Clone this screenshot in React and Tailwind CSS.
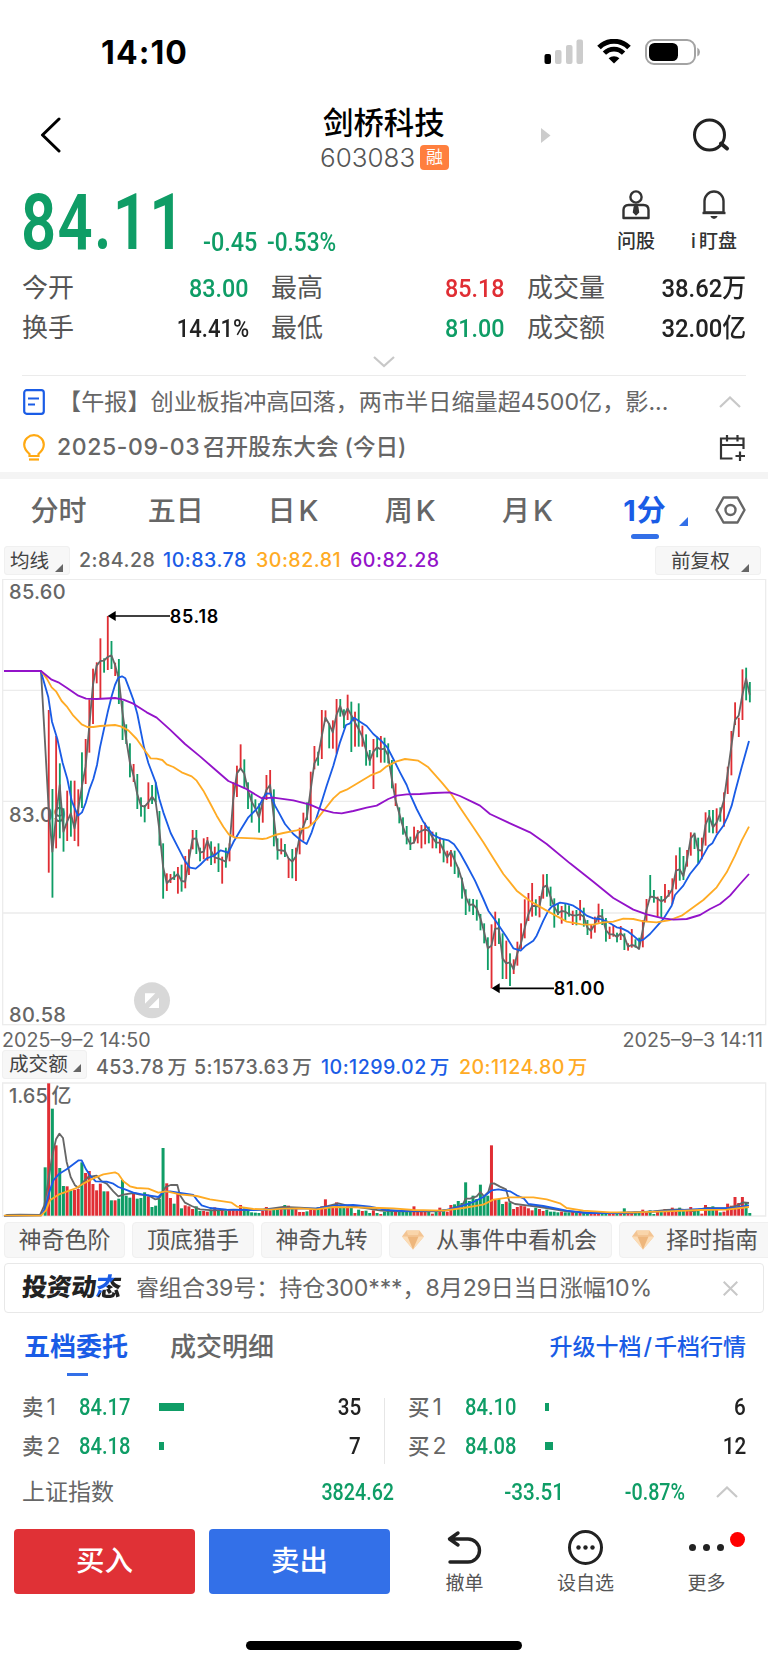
const GREEN = "#0f9d66";
const RED = "#e02e34";
const BLUE = "#1a5ce6";
const ORANGE = "#ffab24";
const PURPLE = "#9313c9";
const GREY = "#666666";

// chart units are thirds of a pixel
const STEP = 11.07;
const X0 = 146;
const barX = (i) => X0 + STEP * i;

// high, low, direction for each minute
const CANDLES = `393 881 r,630 956 g,471 808 r,553 778 g,688 818 g,635 786 r,605 773 g,605 786 r,631 802 r,520 687 g,480 615 r,361 521 r,269 435 r,250 313 r,178 358 r,238 281 g,111 273 r,186 270 g,251 291 r,240 375 g,
366 483 g,436 495 g,493 595 g,555 609 r,585 690 g,655 713 g,678 730 g,610 690 r,618 675 g,610 670 g,696 800 g,793 959 g,883 936 r,885 912 r,877 903 g,864 944 r,857 938 g,831 928 r,811 888 r,753 811 r,
753 825 g,806 847 g,778 841 r,774 845 r,787 858 g,803 853 r,793 879 g,833 914 r,806 866 g,793 847 r,610 771 r,560 654 r,496 570 r,541 628 g,610 690 g,643 731 g,661 688 g,673 761 g,653 731 r,588 663 r,
573 645 r,631 802 g,778 842 g,778 826 r,795 834 g,838 897 r,810 898 g,806 906 r,746 826 r,701 785 r,670 723 g,578 738 r,501 571 r,518 560 g,393 540 r,394 428 r,433 508 g,424 509 r,360 524 r,360 413 g,
391 448 g,347 423 r,368 519 g,398 503 r,373 503 g,440 503 r,466 560 g,513 560 g,480 630 r,473 535 g,471 551 r,476 551 g,493 553 g,543 628 g,613 681 r,685 733 g,715 767 g,741 796 g,773 813 g,743 793 r,
753 793 r,738 808 r,731 796 r,743 793 g,758 808 r,760 808 g,775 823 r,781 850 g,815 853 r,813 863 r,815 885 g,866 896 g,896 959 g,931 1008 g,959 998 g,960 1008 g,962 1025 g,1005 1054 g,1033 1093 g,1075 1173 g,
1036 1228 r,998 1101 r,1018 1095 g,1063 1200 g,1085 1200 r,1123 1221 g,1141 1185 r,1088 1160 r,1033 1111 r,961 1078 r,942 1026 r,912 1013 r,961 1010 g,951 1015 r,886 959 r,885 953 g,923 981 g,958 1046 g,975 1008 g,981 1034 r,
973 1023 g,979 1013 g,995 1038 r,993 1039 g,963 1024 r,986 1043 g,1023 1068 g,1035 1079 r,1013 1061 r,974 1031 r,990 1038 g,1017 1088 g,1043 1080 r,1038 1073 r,1061 1090 g,1041 1083 r,1063 1113 g,1093 1115 r,1050 1106 r,1081 1106 g,
1076 1108 g,1023 1105 r,960 1026 r,888 956 g,933 971 g,953 1013 r,951 1015 g,915 971 r,933 953 r,898 976 r,829 931 r,805 905 g,831 903 g,813 863 r,760 830 r,761 810 g,776 853 g,776 841 r,700 800 r,693 761 g,
693 763 g,688 763 r,685 728 g,640 743 r,563 645 r,456 589 r,370 438 r,416 474 r,271 423 r,266 364 g,309 370 g`
  .split(",")
  .map((row) => {
    const [high, low, dir] = row.trim().split(" ");
    return { high: +high, low: +low, color: dir === "r" ? RED : GREEN };
  });

const MA2 = [
  690, 818, 713, 618, 758, 728, 703, 748, 690, 623, 563, 443, 318, 260, 246, 245, 234, 229, 258, 300,
  400, 480, 550, 590, 645, 680, 683, 670, 653, 668, 753, 863, 913, 901, 895, 885, 906, 908, 843, 780,
  778, 821, 818, 785, 815, 836, 838, 843, 848, 803, 663, 583, 568, 583, 633, 668, 688, 715, 668, 633,
  618, 713, 813, 814, 816, 838, 848, 833, 773, 743, 713, 633, 553, 533, 473, 416, 435, 460, 408, 381,
  413, 388, 408, 430, 450, 473, 513, 545, 518, 505, 511, 509, 530, 600, 663, 703, 743, 773, 795, 791,
  763, 756, 751, 756, 775, 791, 791, 813, 835, 818, 843, 868, 903, 953, 978, 976, 988, 1018, 1058, 1108,
  1100, 1049, 1048, 1138, 1153, 1150, 1171, 1123, 1093, 1048, 1006, 981, 981, 983, 925, 919, 953, 983, 1003, 996,
  998, 1005, 1009, 1009, 1006, 1013, 1046, 1055, 1035, 1011, 1012, 1053, 1066, 1066, 1074, 1063, 1073, 1103, 1098, 1101,
  1110, 1053, 993, 953, 954, 959, 967, 961, 948, 931, 875, 871, 891, 843, 778, 765, 813, 815, 738, 711,
  745, 731, 703, 663, 583, 503, 423, 410, 348, 298, 348,
];

const MA10 =
  "123,278 145,355 156,428 172,480 188,552 202,600 215,665 225,690 234,710 246,700 257,672 268,632 280,600 291,558 300,505 312,450 323,400 335,352 345,318 355,296 366,292 376,298 390,335 401,365 412,405 432,505 445,552 467,610 478,660 490,700 512,762 534,805 556,848 570,866 587,869 600,858 620,838 642,830 662,814 685,821 700,790 722,752 745,715 767,693 778,680 789,658 800,643 811,644 825,680 835,698 855,735 880,765 900,782 920,795 935,760 950,715 966,665 980,620 1000,560 1020,490 1038,438 1050,433 1062,416 1080,428 1100,441 1120,465 1143,485 1162,505 1180,540 1200,580 1220,618 1232,650 1250,690 1268,725 1285,750 1300,768 1320,778 1345,784 1362,796 1380,822 1400,858 1425,905 1450,960 1465,995 1490,1030 1520,1075 1540,1108 1562,1115 1575,1102 1600,1085 1610,1070 1630,1025 1645,995 1655,983 1680,971 1700,974 1720,980 1740,993 1760,1010 1780,1018 1800,1020 1820,1027 1850,1045 1865,1048 1885,1058 1900,1070 1918,1086 1930,1082 1950,1065 1975,1037 1990,1020 2015,980 2025,948 2050,920 2070,885 2098,850 2125,802 2137,793 2150,768 2170,740 2182,715 2195,680 2205,640 2225,565 2247,486";
const MA30 =
  "123,276 140,298 155,325 168,337 185,366 200,382 220,410 245,436 262,444 280,444 300,441 345,438 362,442 385,454 410,480 435,515 452,538 470,539 487,543 500,556 520,564 545,580 575,592 590,605 610,635 630,672 650,710 670,743 686,766 705,776 760,778 787,780 800,778 825,768 850,762 890,754 925,745 950,722 975,690 1000,658 1020,640 1040,632 1065,617 1110,590 1140,578 1160,562 1190,547 1215,540 1255,545 1285,565 1325,610 1350,640 1385,693 1420,745 1450,790 1480,838 1510,885 1550,935 1590,966 1640,995 1700,1028 1745,1036 1780,1037 1805,1031 1840,1028 1870,1019 1900,1020 1930,1027 1970,1030 2010,1023 2045,1010 2080,985 2110,963 2150,925 2180,880 2205,830 2225,785 2247,743";
const MA60 =
  "12,276 123,276 155,302 175,310 200,326 235,350 258,359 290,360 345,357 370,362 400,374 440,400 470,416 510,452 555,495 600,532 640,567 685,606 735,628 785,658 820,656 880,664 930,677 965,692 1000,701 1025,703 1060,696 1100,686 1130,680 1165,660 1190,650 1220,646 1260,645 1300,642 1350,640 1380,651 1420,670 1440,680 1470,705 1530,733 1590,760 1640,795 1710,853 1780,908 1840,957 1900,992 1940,1006 1990,1018 2020,1022 2060,1020 2100,1008 2130,990 2160,975 2190,950 2220,915 2247,885";

const VOLUMES = [
  397, 321, 211, 143, 89, 88, 75, 77, 80, 160, 128, 134, 95, 76, 96, 73, 73, 46, 46, 51,
  107, 60, 54, 68, 51, 53, 70, 58, 26, 30, 50, 203, 97, 53, 36, 65, 22, 31, 28, 20,
  28, 14, 14, 12, 18, 25, 16, 18, 14, 16, 16, 14, 32, 22, 14, 10, 9, 8, 14, 26,
  16, 22, 20, 20, 32, 30, 22, 20, 11, 11, 13, 18, 20, 25, 28, 49, 24, 25, 40, 28,
  27, 28, 24, 8, 18, 14, 15, 8, 16, 8, 5, 12, 20, 16, 14, 16, 16, 14, 14, 28,
  12, 12, 12, 14, 6, 16, 24, 18, 12, 32, 34, 44, 38, 100, 44, 60, 50, 93, 60, 60,
  211, 48, 50, 35, 42, 40, 20, 26, 30, 28, 22, 16, 24, 20, 14, 18, 12, 12, 10, 12,
  10, 10, 12, 9, 10, 9, 10, 10, 8, 9, 8, 9, 8, 9, 8, 10, 22, 12, 10, 12,
  12, 18, 14, 16, 5, 12, 12, 20, 12, 24, 16, 24, 20, 14, 26, 20, 14, 6, 32, 22,
  28, 20, 10, 12, 36, 30, 56, 38, 56, 38, 8,
];

const VOL5 =
  "12,402 20,399 60,398 120,399 133,370 146,290 157,220 168,172 178,155 189,168 200,240 212,285 225,310 235,317 250,300 265,285 290,281 305,298 320,305 340,328 355,343 370,338 400,333 420,338 445,340 465,352 478,350 487,330 497,315 512,309 532,309 540,340 555,362 575,372 600,382 640,385 700,383 740,384 790,383 850,375 900,377 950,380 985,372 1015,364 1040,370 1100,379 1143,386 1200,388 1300,388 1345,384 1370,375 1388,368 1397,350 1410,350 1430,343 1441,330 1452,343 1465,330 1472,305 1482,304 1500,314 1518,322 1528,358 1545,366 1580,370 1620,375 1700,388 1780,393 1880,393 1960,388 2000,384 2040,382 2080,387 2120,378 2180,379 2210,371 2230,361 2247,363";
const VOL10 =
  "12,402 123,400 135,380 148,330 160,295 178,275 200,262 220,247 236,235 245,235 258,262 270,280 287,298 320,299 340,305 355,315 375,322 400,332 430,338 475,345 490,330 510,328 580,339 592,355 605,370 630,378 680,383 760,384 850,380 950,379 1010,370 1060,369 1110,374 1160,384 1210,387 1330,386 1380,374 1420,360 1450,345 1475,325 1495,322 1530,328 1550,340 1572,350 1585,366 1630,372 1700,386 1760,393 1850,393 1960,389 2050,384 2120,380 2200,378 2247,370";
const VOL20 =
  "12,401 123,401 138,385 150,355 175,338 200,329 225,320 250,305 280,289 310,277 345,271 355,276 370,298 390,313 410,318 445,320 475,332 500,328 540,337 590,342 630,352 695,362 712,374 760,381 810,383 850,380 900,379 950,382 1000,375 1060,376 1140,378 1180,379 1240,384 1330,386 1390,378 1450,368 1480,353 1530,346 1600,346 1640,352 1680,364 1700,378 1750,386 1830,391 1900,391 2000,388 2100,384 2180,383 2247,375";

function Line({ points, color }) {
  return <polyline points={points} fill="none" stroke={color} strokeWidth="5.5" strokeLinejoin="round" />;
}

function Chevron({ up = false }) {
  return (
    <svg width="22" height="12" viewBox="0 0 22 12" fill="none" stroke="#c8c8c8" strokeWidth="2.2">
      <path d={up ? "M1 11 L11 1.5 L21 11" : "M1 1 L11 10 L21 1"} />
    </svg>
  );
}

function Corner({ color = GREY, size = 8 }) {
  return (
    <svg width={size} height={size} viewBox="0 0 8 8">
      <path d="M8 0V8H0Z" fill={color} />
    </svg>
  );
}

function StatusBar() {
  return (
    <div className="h-[104px] pl-[101px] pr-[67px] flex justify-between items-start">
      <div className="mt-[33px] text-[32px] leading-[40px] font-bold text-black tracking-[1.1px]">14:10</div>
      <div className="mt-[39px] flex items-start">
        <svg width="39" height="26" viewBox="0 0 39 26">
          <rect x="0.5" y="15" width="6.5" height="10" rx="2" fill="#000" />
          <rect x="11" y="11" width="6.5" height="14" rx="2" fill="#ccc" />
          <rect x="22" y="6" width="6.5" height="19" rx="2" fill="#ccc" />
          <rect x="32.5" y="0.5" width="6.5" height="24.5" rx="2" fill="#ccc" />
        </svg>
        <svg className="ml-[14px]" width="34" height="26" viewBox="0 0 34 26">
          <path d="M2 8.6 A21 21 0 0 1 32 8.6" fill="none" stroke="#000" strokeWidth="5" />
          <path d="M7.4 14.2 A13.4 13.4 0 0 1 26.6 14.2" fill="none" stroke="#000" strokeWidth="4.6" />
          <path d="M17 24.5 L11.6 19.3 A8 8 0 0 1 22.4 19.3 Z" fill="#000" />
        </svg>
        <svg className="ml-[14px]" width="56" height="26" viewBox="0 0 56 26">
          <rect x="1" y="1" width="49" height="24" rx="8" fill="none" stroke="#a3a3a3" strokeWidth="2" />
          <rect x="4" y="4" width="29" height="18" rx="5.5" fill="#000" />
          <path d="M52.3 8.5 Q55 10 55 13 Q55 16 52.3 17.5Z" fill="#a3a3a3" />
        </svg>
      </div>
    </div>
  );
}

function Header() {
  return (
    <div className="h-[76px] grid grid-cols-[320px_130px_1fr]">
      <div className="pl-[40px] pt-[13px]">
        <svg width="22" height="36" viewBox="0 0 22 36" fill="none" stroke="#000" strokeWidth="3" strokeLinecap="round" strokeLinejoin="round">
          <path d="M19 2 L2.5 18 L19 34" />
        </svg>
      </div>
      <div>
        <h1 className="pl-[3px] pt-px text-[30.4px] leading-[36px] font-medium text-black whitespace-nowrap">剑桥科技</h1>
        <div className="flex items-center h-[32px]">
          <span className="w-[100px] text-[26px] font-light text-[#555]">603083</span>
          <span className="w-[29px] h-[25px] rounded-[4px] bg-[#ff7f3e] text-white text-[17px] leading-[24px] text-center">融</span>
        </div>
      </div>
      <div className="flex justify-between pl-[91px] pr-[38px]">
        <svg className="mt-[24px]" width="10" height="15" viewBox="0 0 10 15">
          <path d="M0 0 L9.5 7.5 L0 15Z" fill="#ccc" />
        </svg>
        <svg className="mt-[13px]" width="38" height="36" viewBox="0 0 38 36" fill="none" stroke="#222" strokeWidth="3" strokeLinecap="round">
          <circle cx="17.5" cy="18" r="15" />
          <path d="M29 26.5 L35 31.5" strokeWidth="4" />
        </svg>
      </div>
    </div>
  );
}

function Price() {
  return (
    <div className="h-[86px] pl-[21px] pr-[24px] flex justify-between">
      <div className="flex text-[#0f9d66] font-['Roboto',sans-serif]">
        <div className="w-[182px] h-[86px]">
          <div className="origin-left scale-x-[0.79] w-max text-[78px] leading-[86px] font-semibold tracking-[1.6px]">84.11</div>
        </div>
        <div className="w-[64px] pt-[46px]">
          <div className="origin-left scale-x-[0.9] w-max text-[26px] leading-[32px] font-medium">-0.45</div>
        </div>
        <div className="pt-[46px]">
          <div className="origin-left scale-x-[0.87] w-max text-[26px] leading-[32px] font-medium">-0.53%</div>
        </div>
      </div>
      <div className="flex text-[19px] leading-[24px] font-medium text-[#333]">
        <div className="w-[60px] pt-[10px] flex flex-col items-center">
          <svg width="28" height="30" viewBox="0 0 28 30" fill="none" stroke="#333" strokeWidth="2.4">
            <circle cx="14" cy="7" r="5.6" />
            <path d="M1.5 28 V20 Q1.5 15 6.5 15 H21.5 Q26.5 15 26.5 20 V28Z" strokeLinejoin="round" />
            <path d="M14 15.5 L12.7 17.5 L12 22 L14 24 L16 22 L15.3 17.5Z" fill="#333" />
          </svg>
          <span className="mt-[10px]">问股</span>
        </div>
        <div className="ml-[18px] w-[60px] pt-[10px] flex flex-col items-center">
          <svg width="24" height="30" viewBox="0 0 24 30" fill="none" stroke="#333" strokeWidth="2.4">
            <path d="M2.5 22.5 V11 A9.5 9.5 0 0 1 21.5 11 V22.5Z" strokeLinejoin="round" />
            <path d="M0.5 23 H23.5" />
            <path d="M8.3 26 H15.7 Q14.5 29 12 29 Q9.5 29 8.3 26Z" fill="#333" stroke="none" />
          </svg>
          <span className="mt-[10px] whitespace-nowrap">i<span className="ml-[3px]">盯盘</span></span>
        </div>
      </div>
    </div>
  );
}

const STATS = [
  [
    ["今开", "83.00", "text-[#0f9d66] scale-x-[0.88]"],
    ["最高", "85.18", "text-[#e02e34] scale-x-[0.88]"],
    ["成交量", "38.62万", "text-[#222] scale-x-[0.9]"],
  ],
  [
    ["换手", "14.41%", "text-[#222] scale-x-[0.83]"],
    ["最低", "81.00", "text-[#0f9d66] scale-x-[0.88]"],
    ["成交额", "32.00亿", "text-[#222] scale-x-[0.9]"],
  ],
];

function Stats() {
  return (
    <div className="h-[110px] mx-[22px] pt-[2px] border-b border-[#ebebeb]">
      {STATS.map((row, r) => (
        <div key={r} className="h-10 grid grid-cols-[227px_234px_219px] gap-x-[22px] items-center">
          {row.map(([label, value, color]) => (
            <div key={label} className="flex justify-between items-center text-[26px] leading-10">
              <span className="text-[#555] whitespace-nowrap">{label}</span>
              <span className={`origin-right text-[26.5px] font-medium font-['Roboto','Noto_Sans_CJK_SC',sans-serif] ${color}`}>
                {value}
              </span>
            </div>
          ))}
        </div>
      ))}
      <div className="flex justify-center pt-[8px]">
        <Chevron />
      </div>
    </div>
  );
}

function News() {
  return (
    <div className="h-[96px] pl-[23px] pr-[22px] text-[23.15px] text-[#666]">
      <div className="h-[52px] flex items-center">
        <svg width="22" height="26" viewBox="0 0 22 26" fill="none" stroke={BLUE} strokeWidth="2.2">
          <rect x="1.2" y="1.2" width="19.6" height="23.6" rx="2.5" />
          <path d="M5 9.5 H16 M5 15.5 H12" />
        </svg>
        <span className="ml-[13px] flex-1 whitespace-nowrap">【午报】创业板指冲高回落，两市半日缩量超4500亿，影...</span>
        <span className="mr-[5px]"><Chevron up /></span>
      </div>
      <div className="h-[38px] flex items-center font-medium">
        <svg width="22" height="27" viewBox="0 0 22 27" fill="none" stroke="#ffa912" strokeWidth="2.2">
          <path d="M6.5 22 V20 Q1.2 15.5 1.2 10.5 A9.8 9.3 0 0 1 20.8 10.5 Q20.8 15.5 15.5 20 V22Z" />
          <path d="M6 25.5 H16" />
        </svg>
        <span className="ml-[12px] w-[146px] text-[23px] tracking-[0.6px] whitespace-nowrap">2025-09-03</span>
        <span className="flex-1 text-[22.6px] whitespace-nowrap">召开股东大会 (今日)</span>
        <svg width="27" height="27" viewBox="0 0 27 27" fill="none" stroke="#333" strokeWidth="2.2">
          <path d="M24.5 15 V4.5 H2 V24.5 H13.5 M2 11 H24.5 M8 1 V7.5 M18.5 1 V7.5 M21 17.5 V27 M16.5 22 H26" />
        </svg>
      </div>
    </div>
  );
}

const PERIODS = ["日", "周", "月"];

function PeriodTabs() {
  return (
    <div className="h-[67px] flex text-[28px] leading-[40px] text-[#666] font-medium">
      <div className="w-[586px] pt-3 grid grid-cols-5 text-center">
        <span>分时</span>
        <span>五日</span>
        {PERIODS.map((p) => (
          <span key={p}>
            {p}
            <span className="ml-[3px] text-[29px]">K</span>
          </span>
        ))}
      </div>
      <div className="w-[114px] pt-3 pl-[34px] flex font-bold text-[#1a5ce6]">
        <div className="w-[50px] flex flex-col items-center">
          <span className="text-[29px] tracking-[1px] whitespace-nowrap">1分</span>
          <span className="mt-[3px] w-7 h-[5px] rounded-full bg-[#3370e8]" />
        </div>
        <span className="pl-[9px] pt-[26px] leading-none">
          <Corner color="#3370e8" size={9} />
        </span>
      </div>
      <svg className="mt-[17px] ml-[15px]" width="31" height="28" viewBox="0 0 31 28" fill="none" stroke="#666" strokeWidth="2.4">
        <path d="M8.5 1.5 H22.5 L29.5 14 L22.5 26.5 H8.5 L1.5 14Z" strokeLinejoin="round" />
        <circle cx="15.5" cy="14" r="5" />
      </svg>
    </div>
  );
}

function AverageRow() {
  return (
    <div className="h-[33px] pl-1 pr-[7px] flex items-start text-[19.6px] leading-[28px] font-medium tracking-[0.5px]">
      <div className="w-[66px] h-[29px] pl-[5px] flex bg-[#f7f7f7] border border-[#f0f0f0] rounded-[3px] text-[#444] font-normal tracking-normal">
        均线
        <span className="mt-[17px] ml-[6px] leading-none"><Corner /></span>
      </div>
      <span className="ml-[9px] w-[84px] text-[#666] whitespace-nowrap">2:84.28</span>
      <span className="w-[93px] text-[#1a5ce6]">10:83.78</span>
      <span className="w-[94px] text-[#ffab24]">30:82.81</span>
      <span className="flex-1 text-[#9313c9]">60:82.28</span>
      <div className="w-[106px] h-[29px] pl-[15px] flex bg-[#f7f7f7] border border-[#f0f0f0] rounded-[3px] text-[#444] font-normal tracking-normal">
        前复权
        <span className="mt-[17px] ml-[11px] leading-none"><Corner /></span>
      </div>
    </div>
  );
}

function Callout({ x, y, label }) {
  return (
    <g>
      <path d={`M${x} ${y} l24 -15 v30Z`} />
      <path d={`M${x + 20} ${y} H${x + 187}`} stroke="#000" strokeWidth="5" />
      <text x={x + 186} y={y + 20} fontSize="54" fontWeight="600" letterSpacing="2.2">{label}</text>
    </g>
  );
}

function PriceChart() {
  const ma2 = "12,276 123,276 135,490 " + MA2.map((y, i) => `${barX(i)},${y}`).join(" ");
  return (
    <svg className="block" width="768" height="447" viewBox="0 0 2304 1341">
      <g fill="none" stroke="#ececec" strokeWidth="4">
        <rect x="8" y="1" width="2289" height="1336" />
        <path d="M8 334 H2297 M8 667 H2297 M8 1002 H2297" />
      </g>
      <g fontSize="60" fontWeight="500" letterSpacing="0.9" fill={GREY}>
        <text x="27" y="61">85.60</text>
        <text x="27" y="730">83.09</text>
        <text x="27" y="1328">80.58</text>
      </g>
      {CANDLES.map((c, i) => (
        <rect key={i} x={barX(i) - 2.5} y={c.high} width="5.5" height={c.low - c.high} fill={c.color} />
      ))}
      <Line points={ma2} color={GREY} />
      <Line points={MA10} color={BLUE} />
      <Line points={MA30} color={ORANGE} />
      <Line points={MA60} color={PURPLE} />
      <Callout x={323} y={111} label="85.18" />
      <Callout x={1475} y={1228} label="81.00" />
      <circle cx="456" cy="1264" r="54" fill="#d8d8d8" />
      <path d="M435 1243 h31 l-31 31Z M477 1287 h-31 l31 -31Z" fill="#fff" />
    </svg>
  );
}

function AmountRow() {
  return (
    <div className="h-[32px] pl-[2px] flex items-start text-[19.6px] font-medium whitespace-nowrap">
      <div className="w-[85px] h-[29px] pl-[6px] flex leading-[27px] bg-[#f7f7f7] border border-[#f0f0f0] rounded-[3px] text-[#444] font-normal">
        成交额
        <span className="mt-[13px] ml-[5px] leading-none"><Corner /></span>
      </div>
      <div className="pl-[9px] flex leading-[34px] tracking-[0.45px]">
        <span className="w-[98px] text-[#666]">453.78<span className="ml-[3px]">万</span></span>
        <span className="w-[127px] text-[#666]">5:1573.63<span className="ml-[3px]">万</span></span>
        <span className="w-[138px] text-[#1a5ce6]">10:1299.02<span className="ml-[3px]">万</span></span>
        <span className="text-[#ffab24]">20:1124.80<span className="ml-[3px]">万</span></span>
      </div>
    </div>
  );
}

function VolumeChart() {
  return (
    <svg className="block" width="768" height="135" viewBox="0 0 2304 405">
      <path d="M8 402 V3 H2297 V402 Z" fill="none" stroke="#ececec" strokeWidth="4" />
      <text x="27" y="62" fontSize="60" fontWeight="500" fill={GREY}>1.65<tspan dx="11">亿</tspan></text>
      <rect x="131" y="256" width="9" height="145" fill={GREEN} />
      {VOLUMES.map((h, i) => (
        <rect key={i} x={barX(i) - 4.5} y={401 - h} width="9" height={h} fill={CANDLES[i].color} />
      ))}
      <Line points={VOL5} color={GREY} />
      <Line points={VOL10} color={BLUE} />
      <Line points={VOL20} color={ORANGE} />
    </svg>
  );
}

function Gem() {
  return (
    <svg width="22" height="20" viewBox="0 0 22 20">
      <path d="M4.5 0.5 H17.5 L22 6.5 L11 19.5 L0 6.5Z" fill="#f3c493" />
      <path d="M0 6.5 H22 L11 19.5Z" fill="#fbdcb6" />
      <path d="M5.5 6.5 H16.5 L11 19.5Z" fill="#eeb67c" />
      <path d="M4.5 0.5 H17.5 L16 5 H6Z" fill="#f9d5aa" />
    </svg>
  );
}

const CHIPS = [
  { label: "神奇色阶", width: "w-[121px]" },
  { label: "顶底猎手", width: "w-[122px]" },
  { label: "神奇九转", width: "w-[121px]" },
  { label: "从事件中看机会", width: "w-[223px]", gem: true },
  { label: "择时指南", width: "w-[170px]", gem: true },
];

function Chips() {
  return (
    <div className="h-[46px] pl-1 pt-[5px] flex gap-[7px] overflow-hidden">
      {CHIPS.map(({ label, width, gem }) => (
        <div
          key={label}
          className={`${width} h-9 shrink-0 flex items-center bg-[#f7f7f7] border border-[#f0f0f0] rounded text-[23px] text-[#555] whitespace-nowrap ${gem ? "pl-3 gap-[12px]" : "justify-center"}`}
        >
          {gem && <Gem />}
          {label}
        </div>
      ))}
    </div>
  );
}

function Banner() {
  return (
    <div className="mx-1 h-[50px] border border-[#e8e8e8] rounded pl-[17px] pr-[25px] flex items-center">
      <span className="w-[114px] text-[25px] font-black -skew-x-6 tracking-[-0.3px] text-[#222] whitespace-nowrap">
        投资动<span className="bg-linear-to-br from-[#1a5ce6] from-45% to-[#222] to-46% bg-clip-text text-transparent">态</span>
      </span>
      <span className="flex-1 text-[23.1px] tracking-[-0.12px] text-[#666] whitespace-nowrap">睿组合39号：持仓300***，8月29日当日涨幅10%</span>
      <svg width="15" height="15" viewBox="0 0 15 15" fill="none" stroke="#c8c8c8" strokeWidth="2">
        <path d="M0.7 0.7 L14.3 14.3 M14.3 0.7 L0.7 14.3" />
      </svg>
    </div>
  );
}

function OrderRow({ side, price, bar, count }) {
  return (
    <div className="h-[39px] flex items-center text-[24px] font-medium font-['Roboto','Noto_Sans_CJK_SC',sans-serif]">
      <span className="w-[57px] -ml-px pt-px text-[21.5px] text-[#666] whitespace-nowrap">
        {side[0]}
        <span className="ml-[3px] text-[23px] font-normal font-['Inter',sans-serif]">{side[1]}</span>
      </span>
      <span className="w-[80px]">
        <span className="inline-block origin-left scale-x-[0.84] text-[#0f9d66]">{price}</span>
      </span>
      <span className="h-2 bg-[#0f9d66]" style={{ width: bar }} />
      <span className="ml-auto origin-right scale-x-[0.86] text-[#222]">{count}</span>
    </div>
  );
}

function OrderBook() {
  return (
    <div className="h-[151px]">
      <div className="h-[74px] pt-[15px] pl-[24px] pr-[22px] flex text-[26px] leading-[38px]">
        <div className="w-[146px] font-bold text-[#1a5ce6]">
          五档委托
          <div className="mt-[7px] ml-[43px] w-[21px] h-[3px] bg-[#3370e8]" />
        </div>
        <div className="flex-1 text-[#666] font-medium">成交明细</div>
        <div className="text-[23px] font-medium text-[#1a5ce6] whitespace-nowrap">
          升级十档<span className="mx-[2px]">/</span>千档行情
        </div>
      </div>
      <div className="pl-[23px] pr-[22px] flex">
        <div className="w-[361px] pr-[23px]">
          <OrderRow side={["卖", "1"]} price="84.17" bar={25} count="35" />
          <OrderRow side={["卖", "2"]} price="84.18" bar={5} count="7" />
        </div>
        <div className="mt-[11px] h-[66px] w-px bg-[#e6e6e6]" />
        <div className="flex-1 pl-6">
          <OrderRow side={["买", "1"]} price="84.10" bar={4} count="6" />
          <OrderRow side={["买", "2"]} price="84.08" bar={8} count="12" />
        </div>
      </div>
    </div>
  );
}

function IndexRow() {
  return (
    <div className="h-[56px] pl-[22px] pr-[30px] flex items-center text-[#0f9d66]">
      <span className="w-[200px] text-[23px] text-[#666]">上证指数</span>
      <div className="flex-1 grid grid-cols-[172px_170px_121px] text-right text-[24px] font-medium font-['Roboto',sans-serif]">
        <span className="origin-right scale-x-[0.82]">3824.62</span>
        <span className="origin-right scale-x-[0.86]">-33.51</span>
        <span className="origin-right scale-x-[0.82]">-0.87%</span>
      </div>
      <Chevron up />
    </div>
  );
}

function BottomBar() {
  return (
    <div className="h-[112px] pt-[9px] pl-[14px] flex">
      <button className="w-[181px] h-[65px] rounded-[4px] bg-[#e03136] text-white text-[28.5px] font-medium">买入</button>
      <button className="ml-[14px] w-[181px] h-[65px] rounded-[4px] bg-[#3370e8] text-white text-[28.5px] font-medium">卖出</button>
      <div className="ml-[14px] flex-1 grid grid-cols-[121px_121px_121px] text-[19px] leading-[26px] text-[#555]">
        <div className="flex flex-col items-center">
          <svg className="mt-[1px]" width="36" height="36" viewBox="0 0 36 36" fill="none" stroke="#222" strokeWidth="3.4" strokeLinecap="round" strokeLinejoin="round">
            <path d="M11 3 L2.5 9 L11 15 M3 9 H21 A11.5 11.5 0 0 1 21 32 H3" />
          </svg>
          <span className="mt-[5px]">撤单</span>
        </div>
        <div className="flex flex-col items-center">
          <svg width="37" height="37" viewBox="0 0 37 37">
            <circle cx="18.5" cy="18.5" r="16" fill="none" stroke="#222" strokeWidth="3" />
            <g fill="#222">
              <circle cx="11.5" cy="18.5" r="2.2" />
              <circle cx="18.5" cy="18.5" r="2.2" />
              <circle cx="25.5" cy="18.5" r="2.2" />
            </g>
          </svg>
          <span className="mt-[5px]">设自选</span>
        </div>
        <div className="relative flex flex-col items-center">
          <svg width="37" height="37" viewBox="0 0 37 37" fill="#222">
            <circle cx="4.5" cy="18.5" r="3.5" />
            <circle cx="18.5" cy="18.5" r="3.5" />
            <circle cx="32.5" cy="18.5" r="3.5" />
          </svg>
          <span className="absolute right-[22px] top-[3px] w-[15px] h-[15px] rounded-full bg-[#ff0000]" />
          <span className="mt-[5px]">更多</span>
        </div>
      </div>
    </div>
  );
}

export default function App() {
  return (
    <div className="w-[768px] h-[1665px] overflow-hidden bg-white font-['Inter','Noto_Sans_CJK_SC',sans-serif]">
      <StatusBar />
      <Header />
      <Price />
      <Stats />
      <News />
      <div className="h-[7px] bg-[#f4f4f4]" />
      <PeriodTabs />
      <AverageRow />
      <PriceChart />
      <div className="h-6 pl-[2px] pr-[5px] flex justify-between text-[19.7px] leading-[28px] text-[#666]">
        <span>2025–9–2 14:50</span>
        <span>2025–9–3 14:11</span>
      </div>
      <AmountRow />
      <VolumeChart />
      <Chips />
      <Banner />
      <OrderBook />
      <IndexRow />
      <BottomBar />
      <div className="mx-auto mt-[9px] w-[276px] h-[9px] rounded-full bg-black" />
    </div>
  );
}
